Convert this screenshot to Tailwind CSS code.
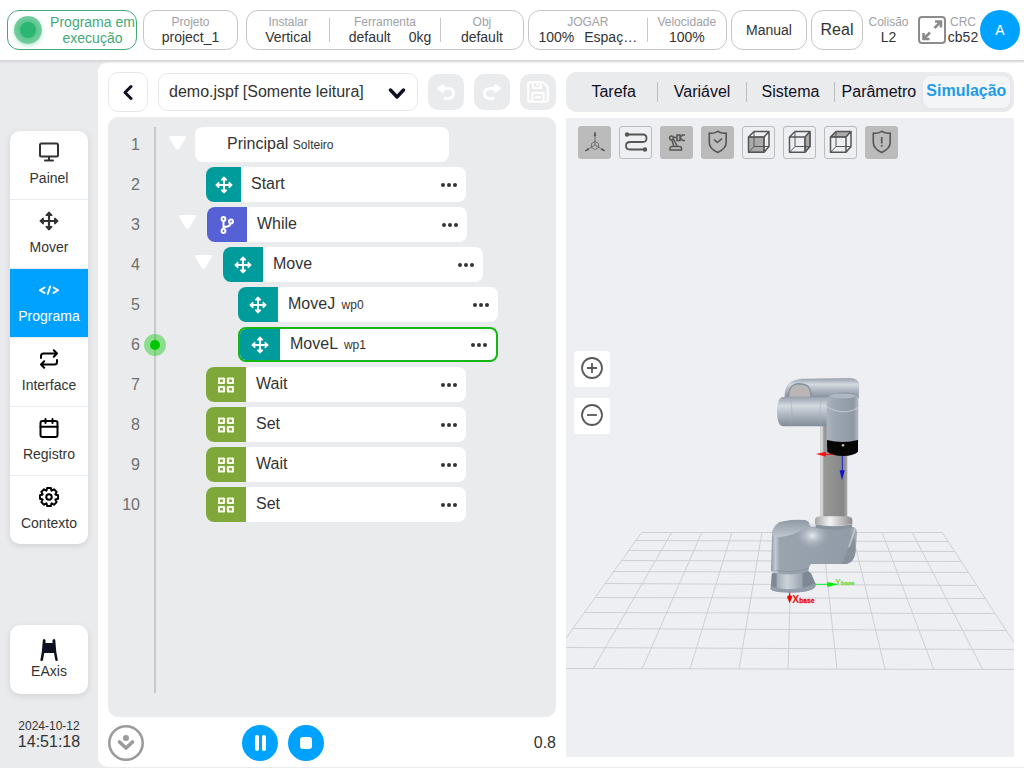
<!DOCTYPE html>
<html lang="pt">
<head>
    <meta charset="UTF-8">
    <meta name="viewport" content="width=device-width, initial-scale=1.0">
    <title>demo.jspf - Programa</title>
    <script src="https://cdn.jsdelivr.net/npm/@tailwindcss/browser@4"></script>
</head>
<body class="flex h-screen min-h-[700px] flex-col bg-[#eaebed] font-['Liberation_Sans',Arial,sans-serif] text-sm text-[#333]">

    <!-- Shared icons -->
    <svg class="hidden">
        <symbol id="move" viewBox="0 0 20 20">
            <path d="M10 3v14M3 10h14" fill="none" stroke="currentColor" stroke-width="2.200"/>
            <path d="M10 1.200 12.800 4.200H7.200zM10 18.800l2.800-3H7.200zM1.200 10l3-2.800v5.600zM18.800 10l-3-2.800v5.600z" fill="currentColor" stroke="currentColor" stroke-width="1.400" stroke-linejoin="round"/>
        </symbol>
        <symbol id="blocks" viewBox="0 0 16 16">
            <path d="M1 1.500h5v4.500H1zM10 1.500h5v4.500h-5zM1 10h5v4.500H1zM10 10h5v4.500h-5z" fill="none" stroke="currentColor" stroke-width="2.200" stroke-linejoin="round"/>
        </symbol>
        <symbol id="dots" viewBox="0 0 16 4">
            <circle cx="2" cy="2" r="2"/><circle cx="8" cy="2" r="2"/><circle cx="14" cy="2" r="2"/>
        </symbol>
        <symbol id="caret" viewBox="0 0 17 14">
            <path d="M2 0h13q3 0 1.500 2.500L10.500 12.500q-2 2.500-4 0L.5 2.500Q-1 0 2 0z" fill="#fff"/>
        </symbol>
    </svg>

    <!-- Status bar -->
    <header class="z-10 flex h-[60px] shrink-0 items-center gap-1 bg-white pr-1 pl-[7px] text-center shadow-[0_1px_2px_1px_#d5d6d8]">
        <div class="flex h-10 w-[130px] items-center rounded-xl border border-[#43a877] pl-1.5">
            <span class="flex size-7 shrink-0 items-center justify-center rounded-full bg-radial from-[#2bb673] to-[#8fd9b4] shadow-[0_2px_4px_#c5ecd8]"><span class="size-4 rounded-full bg-[#2bb673]"></span></span>
            <span class="ml-2 w-[85px] text-sm leading-4 whitespace-nowrap text-[#43a877]">Programa em<br>execução</span>
        </div>
        <div class="ml-0.5 flex h-10 w-[95px] flex-col justify-center rounded-xl border border-[#c5c6c8]">
            <span class="text-xs leading-[14px] text-[#a0a1a6]">Projeto</span>
            <span class="leading-4">project_1</span>
        </div>
        <div class="ml-1 flex h-10 flex-1 items-center rounded-xl border border-[#c5c6c8]">
            <div class="flex h-6 flex-3 flex-col justify-center border-r border-[#c5c6c8]">
                <span class="text-xs leading-[14px] text-[#a0a1a6]">Instalar</span>
                <span class="leading-4">Vertical</span>
            </div>
            <div class="flex h-6 flex-4 flex-col justify-center border-r border-[#c5c6c8]">
                <span class="text-xs leading-[14px] text-[#a0a1a6]">Ferramenta</span>
                <span class="flex justify-center gap-[18px] pl-2.5 leading-4"><span>default</span><span>0kg</span></span>
            </div>
            <div class="flex h-6 flex-3 flex-col justify-center">
                <span class="text-xs leading-[14px] text-[#a0a1a6]">Obj</span>
                <span class="leading-4">default</span>
            </div>
        </div>
        <div class="flex h-10 w-[199px] items-center rounded-xl border border-[#c5c6c8]">
            <div class="flex h-6 flex-3 flex-col justify-center border-r border-[#c5c6c8]">
                <span class="text-xs leading-[14px] text-[#a0a1a6]">JOGAR</span>
                <span class="flex justify-center gap-2.5 leading-4"><span>100%</span><span>Espaç…</span></span>
            </div>
            <div class="flex h-6 flex-2 flex-col justify-center">
                <span class="text-xs leading-[14px] text-[#a0a1a6]">Velocidade</span>
                <span class="leading-4">100%</span>
            </div>
        </div>
        <button class="h-10 w-[76px] rounded-xl border border-[#c5c6c8]">Manual</button>
        <button class="h-10 w-[52px] rounded-xl border border-[#c5c6c8] text-base">Real</button>
        <div class="flex w-[43px] flex-col">
            <span class="text-xs leading-[14px] text-[#a0a1a6]">Colisão</span>
            <span class="leading-4">L2</span>
        </div>
        <div class="ml-1 flex items-center">
            <button aria-label="Tela cheia" class="size-7">
                <svg viewBox="0 0 28 28" class="size-7" fill="none" stroke="#8c8c8c" stroke-width="2">
                    <rect x="1" y="1" width="26" height="26" rx="3"/>
                    <path d="M17 5.500h6v6M23 5.500l-6.500 6.500M5.500 17v6h6M5.500 23l6.500-6.500" stroke-width="2.600"/>
                </svg>
            </button>
            <div class="flex w-[34px] flex-col items-center">
                <span class="text-xs leading-[14px] text-[#a0a1a6]">CRC</span>
                <span class="leading-4">cb52</span>
            </div>
            <button class="size-10 rounded-full bg-[#00a2ff] text-white">A</button>
        </div>
    </header>

    <div class="flex min-h-0 flex-1 pt-0.5 pb-px">
        <!-- Side menu -->
        <aside class="flex w-[98px] shrink-0 flex-col items-center pt-[69px] pb-4">
            <nav class="w-[78px] overflow-hidden rounded-[10px] bg-white shadow-[0_2px_6px_#d0d1d3]">
                <a href="#" class="flex h-[69px] flex-col items-center justify-center gap-1.5 border-b border-[#eaebed] leading-5">
                    <svg viewBox="0 0 20 20" class="size-5" fill="none" stroke="currentColor" stroke-width="2" stroke-linecap="round"><rect x="1" y="1.500" width="18" height="13" rx="1.500"/><path d="M10 15v3M6 18.500h8"/></svg>
                    Painel
                </a>
                <a href="#" class="flex h-[69px] flex-col items-center justify-center gap-1.5 border-b border-[#eaebed] leading-5">
                    <svg class="size-5"><use href="#move"/></svg>
                    Mover
                </a>
                <a href="#" class="flex h-[69px] flex-col items-center justify-center gap-1.5 border-b border-[#eaebed] bg-[#00a2ff] leading-5 text-white">
                    <svg viewBox="0 0 20 20" class="size-5" fill="none" stroke="currentColor" stroke-width="1.900" stroke-linecap="round" stroke-linejoin="round"><path d="M5.500 7.500.9 10.200l4.600 2.700M14.500 7.500l4.600 2.700-4.600 2.700M11.200 6.500 8.800 13.800"/></svg>
                    Programa
                </a>
                <a href="#" class="flex h-[69px] flex-col items-center justify-center gap-1.5 border-b border-[#eaebed] leading-5">
                    <svg viewBox="0 0 20 20" class="size-5" fill="none" stroke="#000" stroke-width="2" stroke-linecap="round" stroke-linejoin="round"><path d="M2 9V7q0-2.500 2.500-2.500H18M14.800 1.200 18 4.500l-3.200 3.200M18 11v2q0 2.500-2.500 2.500H2M5.200 12.300 2 15.500l3.200 3.300"/></svg>
                    Interface
                </a>
                <a href="#" class="flex h-[69px] flex-col items-center justify-center gap-1.5 border-b border-[#eaebed] leading-5">
                    <svg viewBox="0 0 20 20" class="size-5" fill="none" stroke="#000" stroke-width="2" stroke-linecap="round" stroke-linejoin="round"><rect x="1.500" y="3" width="17" height="16" rx="2"/><path d="M1.500 8.700h17M6.500 1v4M13.500 1v4"/></svg>
                    Registro
                </a>
                <a href="#" class="flex h-[68px] flex-col items-center justify-center gap-1.5 leading-5">
                    <svg viewBox="1 1 22 22" class="size-5" fill="none" stroke="#000" stroke-width="2.200" stroke-linejoin="round"><circle cx="12" cy="12" r="3"/><path d="M10 2h4l.8 3 2.700-1.500 2.900 2.900L19 9.200l3 .8v4l-3 .8 1.400 2.800-2.900 2.900-2.700-1.500-.8 3h-4l-.8-3-2.700 1.500-2.900-2.900L5 14.800 2 14v-4l3-.8-1.400-2.800 2.900-2.900L9.200 5z"/></svg>
                    Contexto
                </a>
            </nav>

            <a href="#" class="mt-auto flex h-[69px] w-[78px] flex-col items-center justify-center rounded-[10px] bg-white leading-5 shadow-[0_2px_6px_#d0d1d3]">
                <svg viewBox="0 0 18 22" class="h-[22px] w-[18px]" fill="#0f0f23"><path d="M4 0q1.500 0 1.500 1.500V4h7V1.500Q12.500 0 14 0t1.300 1.500l1 11.500 1.500 8q0 1-1.200 1t-1.300-1L14 14H4.200L3 21q-.2 1-1.500 1T.4 21l1.400-8 1-11.500Q2.900 0 4 0z"/></svg>
                EAxis
            </a>
            <p class="mt-6 text-center text-xs leading-4">2024-10-12<br><span class="text-base leading-4">14:51:18</span></p>
        </aside>

        <main class="flex min-w-0 flex-1 gap-2.5 rounded-l-[10px] bg-white p-2.5 pb-1.5">
            <!-- Program -->
            <section class="flex min-w-0 flex-1 flex-col">
                <div class="flex items-center gap-2.5">
                    <button aria-label="Voltar" class="flex size-10 shrink-0 items-center justify-center rounded-[10px] border border-[#e6e7ea]">
                        <svg viewBox="0 0 10 16" class="h-4 w-2.5" fill="none" stroke="#0f0f23" stroke-width="3" stroke-linecap="round" stroke-linejoin="round"><path d="M8 2.500 2 8.500l6 6"/></svg>
                    </button>
                    <div class="relative flex-1">
                        <select aria-label="Arquivo" class="h-[38px] w-full appearance-none rounded-[10px] border border-[#e6e7ea] bg-white px-2.5 text-base">
                            <option>demo.jspf [Somente leitura]</option>
                        </select>
                        <svg viewBox="0 0 18 12" class="pointer-events-none absolute top-[15px] right-3 h-3 w-[18px]" fill="none" stroke="#0f0f23" stroke-width="3.400" stroke-linecap="round" stroke-linejoin="round"><path d="m2.500 2 6.500 7 6.500-7"/></svg>
                    </div>
                    <button aria-label="Desfazer" class="flex size-9 shrink-0 items-center justify-center rounded-[10px] bg-[#eaebed]">
                        <svg viewBox="0 0 20 20" class="size-5" fill="none" stroke="#fff" stroke-width="2.800" stroke-linecap="round" stroke-linejoin="round"><path d="M3 6.500h9q5.500 0 5.500 5T12 16.500H9"/><path d="M7 3.800 2.500 6.500 7 9.200z" fill="#fff"/></svg>
                    </button>
                    <button aria-label="Refazer" class="flex size-9 shrink-0 items-center justify-center rounded-[10px] bg-[#eaebed]">
                        <svg viewBox="0 0 20 20" class="size-5" fill="none" stroke="#fff" stroke-width="2.800" stroke-linecap="round" stroke-linejoin="round"><path d="M17 6.500H8q-5.500 0-5.500 5T8 16.500h3"/><path d="m13 3.800 4.500 2.700L13 9.200z" fill="#fff"/></svg>
                    </button>
                    <button aria-label="Salvar" class="flex size-9 shrink-0 items-center justify-center rounded-[10px] bg-[#eaebed]">
                        <svg viewBox="0 0 22 22" class="size-[22px]" fill="none" stroke="#fff" stroke-width="2" stroke-linejoin="round"><path d="M3 1.200h13l4.800 4.800v13q0 1.800-1.800 1.800H3q-1.800 0-1.800-1.800V3Q1.200 1.200 3 1.200z"/><path d="M6 1.500V7h8V1.500M5.500 20.500V12h11v8.500M8 16.200h6M10.500 2v3"/></svg>
                    </button>
                </div>

                <!-- Program tree -->
                <div class="mt-[5px] flex min-h-0 flex-1 rounded-[10px] bg-[#eaebed] pt-2.5 pb-6">
                    <div class="w-8 shrink-0 text-right text-base leading-[35px] text-[#707070]">
                        <p class="mb-[5px]">1</p>
                        <p class="mb-[5px]">2</p>
                        <p class="mb-[5px]">3</p>
                        <p class="mb-[5px]">4</p>
                        <p class="mb-[5px]">5</p>
                        <p class="mb-[5px]">6</p>
                        <p class="mb-[5px]">7</p>
                        <p class="mb-[5px]">8</p>
                        <p class="mb-[5px]">9</p>
                        <p>10</p>
                    </div>
                    <div class="relative ml-3.5 w-0.5 shrink-0 bg-[#c8c9cb]">
                        <!-- running line marker -->
                        <span class="absolute top-[207px] -left-2.5 flex size-[22px] items-center justify-center rounded-full bg-[#00c800]/40"><span class="size-2.5 rounded-full bg-[#00c800]"></span></span>
                    </div>
                    <ul class="flex flex-col gap-[5px] text-base leading-[33px]">
                        <li class="flex pl-[13px]">
                            <svg class="mt-[9px] mr-[9px] h-3.5 w-[17px]"><use href="#caret"/></svg>
                            <div class="h-[35px] w-[254px] rounded-lg bg-white pl-8">Principal <span class="text-xs">Solteiro</span></div>
                        </li>
                        <li class="flex pl-[50px]">
                            <div class="flex h-[35px] w-[260px] overflow-hidden rounded-lg bg-white pr-[9px]">
                                <span class="flex w-[35px] items-center justify-center bg-[#009b9b] text-white"><svg class="size-[18px]"><use href="#move"/></svg></span>
                                <span class="ml-2.5 flex-1">Start</span>
                                <button aria-label="Mais"><svg class="h-1 w-4" fill="#333"><use href="#dots"/></svg></button>
                            </div>
                        </li>
                        <li class="flex pl-[23px]">
                            <svg class="mt-2 mr-[11px] h-3.5 w-[17px]"><use href="#caret"/></svg>
                            <div class="flex h-[35px] w-[260px] overflow-hidden rounded-lg bg-white pr-[9px]">
                                <span class="flex w-10 items-center justify-center bg-[#5661d6] text-white">
                                    <svg viewBox="0 0 14 18" class="h-[18px] w-3.5" fill="none" stroke="currentColor" stroke-width="2"><circle cx="3.500" cy="3" r="1.900"/><circle cx="3.500" cy="15" r="1.900"/><circle cx="11" cy="5.500" r="1.900"/><path d="M3.500 5v8M10.500 7.500q-.5 3.500-7 3.500"/></svg>
                                </span>
                                <span class="ml-2.5 flex-1">While</span>
                                <button aria-label="Mais"><svg class="h-1 w-4" fill="#333"><use href="#dots"/></svg></button>
                            </div>
                        </li>
                        <li class="flex pl-[39px]">
                            <svg class="mt-2 mr-[11px] h-3.5 w-[17px]"><use href="#caret"/></svg>
                            <div class="flex h-[35px] w-[260px] overflow-hidden rounded-lg bg-white pr-[9px]">
                                <span class="flex w-10 items-center justify-center bg-[#009b9b] text-white"><svg class="size-[18px]"><use href="#move"/></svg></span>
                                <span class="ml-2.5 flex-1">Move</span>
                                <button aria-label="Mais"><svg class="h-1 w-4" fill="#333"><use href="#dots"/></svg></button>
                            </div>
                        </li>
                        <li class="flex pl-[82px]">
                            <div class="flex h-[35px] w-[260px] overflow-hidden rounded-lg bg-white pr-[9px]">
                                <span class="flex w-10 items-center justify-center bg-[#009b9b] text-white"><svg class="size-[18px]"><use href="#move"/></svg></span>
                                <span class="ml-2.5 flex-1">MoveJ <span class="ml-0.5 text-xs">wp0</span></span>
                                <button aria-label="Mais"><svg class="h-1 w-4" fill="#333"><use href="#dots"/></svg></button>
                            </div>
                        </li>
                        <li class="flex pl-[82px]">
                            <div class="flex h-[35px] w-[260px] overflow-hidden rounded-lg border-2 border-[#14b714] bg-white pr-[9px] leading-[29px]">
                                <span class="flex w-10 items-center justify-center bg-[#009b9b] text-white"><svg class="size-[18px]"><use href="#move"/></svg></span>
                                <span class="ml-2.5 flex-1">MoveL <span class="ml-0.5 text-xs">wp1</span></span>
                                <button aria-label="Mais"><svg class="h-1 w-4" fill="#333"><use href="#dots"/></svg></button>
                            </div>
                        </li>
                        <li class="flex pl-[50px]">
                            <div class="flex h-[35px] w-[260px] overflow-hidden rounded-lg bg-white pr-[9px]">
                                <span class="flex w-10 items-center justify-center bg-[#7ea93a] text-[#f8fce8]"><svg class="size-4"><use href="#blocks"/></svg></span>
                                <span class="ml-2.5 flex-1">Wait</span>
                                <button aria-label="Mais"><svg class="h-1 w-4" fill="#333"><use href="#dots"/></svg></button>
                            </div>
                        </li>
                        <li class="flex pl-[50px]">
                            <div class="flex h-[35px] w-[260px] overflow-hidden rounded-lg bg-white pr-[9px]">
                                <span class="flex w-10 items-center justify-center bg-[#7ea93a] text-[#f8fce8]"><svg class="size-4"><use href="#blocks"/></svg></span>
                                <span class="ml-2.5 flex-1">Set</span>
                                <button aria-label="Mais"><svg class="h-1 w-4" fill="#333"><use href="#dots"/></svg></button>
                            </div>
                        </li>
                        <li class="flex pl-[50px]">
                            <div class="flex h-[35px] w-[260px] overflow-hidden rounded-lg bg-white pr-[9px]">
                                <span class="flex w-10 items-center justify-center bg-[#7ea93a] text-[#f8fce8]"><svg class="size-4"><use href="#blocks"/></svg></span>
                                <span class="ml-2.5 flex-1">Wait</span>
                                <button aria-label="Mais"><svg class="h-1 w-4" fill="#333"><use href="#dots"/></svg></button>
                            </div>
                        </li>
                        <li class="flex pl-[50px]">
                            <div class="flex h-[35px] w-[260px] overflow-hidden rounded-lg bg-white pr-[9px]">
                                <span class="flex w-10 items-center justify-center bg-[#7ea93a] text-[#f8fce8]"><svg class="size-4"><use href="#blocks"/></svg></span>
                                <span class="ml-2.5 flex-1">Set</span>
                                <button aria-label="Mais"><svg class="h-1 w-4" fill="#333"><use href="#dots"/></svg></button>
                            </div>
                        </li>
                    </ul>
                </div>

                <!-- Run controls -->
                <div class="mt-2 flex items-center gap-2.5">
                    <button aria-label="Modo" class="mr-[88px]">
                        <svg viewBox="0 0 36 36" class="size-9" fill="none" stroke="#9b9b9b"><circle cx="18" cy="18" r="16.700" stroke-width="2.600"/><circle cx="18" cy="13" r="3" fill="#9b9b9b" stroke="none"/><path d="m11.500 17 6.500 6 6.500-6" stroke-width="3.600" stroke-linecap="round" stroke-linejoin="round"/></svg>
                    </button>
                    <button aria-label="Pausar" class="flex size-9 items-center justify-center gap-[3px] rounded-full bg-[#00a2ff]">
                        <span class="h-4 w-1 rounded-full bg-white"></span>
                        <span class="h-4 w-1 rounded-full bg-white"></span>
                    </button>
                    <button aria-label="Parar" class="flex size-9 items-center justify-center rounded-full bg-[#00a2ff]">
                        <span class="size-3 rounded-[3px] bg-white"></span>
                    </button>
                    <span class="ml-auto text-base">0.8</span>
                </div>
            </section>

            <!-- Simulation -->
            <section class="flex min-w-0 flex-1 flex-col pb-1">
                <div class="flex h-10 items-center rounded-[10px] bg-[#eaebed] px-1 text-base text-[#0f0f23]">
                    <button class="h-5 flex-1 basis-0 border-r border-[#b9bbbf] leading-[18px]">Tarefa</button>
                    <button class="h-5 flex-1 basis-0 border-r border-[#b9bbbf] leading-[18px]">Variável</button>
                    <button class="h-5 flex-1 basis-0 border-r border-[#b9bbbf] leading-[18px]">Sistema</button>
                    <button class="h-5 flex-1 basis-0 leading-[18px]">Parâmetro</button>
                    <button class="h-8 flex-1 basis-0 rounded-lg bg-[#f4f5f6] pb-0.5 font-bold text-[#1e9ce8] shadow-[0_1px_4px_#dfe5ea]">Simulação</button>
                </div>

                <div class="relative mt-1.5 min-h-0 flex-1 bg-[#eeeff3]">
                    <svg viewBox="566 118 448 639" preserveAspectRatio="xMidYMid slice" class="absolute inset-0 h-full w-full">
                        <defs>
                            <linearGradient id="tube" x2="0" y2="1"><stop offset="0" stop-color="#98a2ae"/><stop offset=".3" stop-color="#d3dae1"/><stop offset=".65" stop-color="#a8b1bc"/><stop offset="1" stop-color="#828c98"/></linearGradient>
                            <linearGradient id="wrist"><stop offset="0" stop-color="#acb5c0"/><stop offset=".25" stop-color="#9da7b3"/><stop offset=".85" stop-color="#8f99a5"/><stop offset="1" stop-color="#b4bcc6"/></linearGradient>
                            <linearGradient id="column"><stop offset="0" stop-color="#c9c9c9"/><stop offset=".08" stop-color="#dcdcdc"/><stop offset=".14" stop-color="#999"/><stop offset=".85" stop-color="#868686"/><stop offset="1" stop-color="#aaa"/></linearGradient>
                            <linearGradient id="body"><stop offset="0" stop-color="#8b95a1"/><stop offset=".05" stop-color="#c5ccd4"/><stop offset=".1" stop-color="#9aa4af"/><stop offset=".9" stop-color="#929ca8"/><stop offset="1" stop-color="#a2abb6"/></linearGradient>
                            <linearGradient id="collar"><stop offset="0" stop-color="#a5a5a5"/><stop offset=".4" stop-color="#f3f3f3"/><stop offset="1" stop-color="#8d8d8d"/></linearGradient>
                            <linearGradient id="foot"><stop offset="0" stop-color="#a3acb7"/><stop offset=".4" stop-color="#ccd3da"/><stop offset="1" stop-color="#99a3ae"/></linearGradient>
                            <linearGradient id="cap" x2="0" y2="1"><stop offset="0" stop-color="#8f99a5"/><stop offset="1" stop-color="#c0c8d0"/></linearGradient>
                            <radialGradient id="glow"><stop offset="0" stop-color="#e6ebf0"/><stop offset=".4" stop-color="#c5cdd5" stop-opacity=".7"/><stop offset="1" stop-color="#a5aeb9" stop-opacity="0"/></radialGradient>
                        </defs>

                        <!-- floor -->
                        <path fill="none" stroke="#cfd0d3" d="M642 532 544 669M672 532 593 669M702 532 642 669M732 532 690 669M762 532 739 669M792 532 788 669M822 532 837 669M852 532 885 669M882 532 934 670M912 532 983 670M942 532 1032 670M642 532.500H942M635 540.500 948 541.500M628 550.500 954 551.500M621 560.500 961 561.500M613 571.500 968 572.500M605 583.500 976 585.500M595 597.500 985 598.500M584 612.500 995 613.500M572 628.500 1006 630.500M559 647.500 1018 649.500M544 668.500 1032 669.500"/>

                        <!-- robot, drawn at three times its size -->
                        <g transform="translate(740 350) scale(.33333)">
                            <path d="M134 145Q134 112 150 99 160 90 185 87L330 85Q356 87 356 103V145z" fill="url(#tube)" stroke="#8f99a5"/>
                            <path d="M145 142Q146 112 160 105 178 97 200 106 212 113 214 142z" fill="#b9b6b5" stroke="#858f9b" stroke-width="4"/>
                            <path d="M240 220H322V505H240z" fill="url(#column)"/>
                            <path d="M126 141H265V229H130Q112 228 111 185 112 143 126 141z" fill="url(#tube)"/>
                            <path d="M150 142Q162 185 150 229M246 142Q234 185 244 229" fill="none" stroke="#a2abb5" stroke-width="1.500"/>
                            <path d="M260 152Q262 132 300 127 345 126 355 143V275H260z" fill="url(#wrist)"/>
                            <ellipse cx="309" cy="138" rx="36" ry="7" fill="#b0b9c3"/>
                            <path d="M260 170Q290 188 318 185 350 182 358 166" fill="none" stroke="#ccd3da" stroke-width="2.500"/>
                            <path d="M261 270Q308 282 354 270V305Q344 317 308 318 280 318 262 305z" fill="#050505"/>
                            <circle cx="309" cy="286" r="4" fill="#bbb"/>
                            <path d="M258 313h22" stroke="#e00" stroke-width="3"/>
                            <path d="m228 312 30-7v15z" fill="#f11"/>
                            <path d="M307 318v45" stroke="#22d" stroke-width="3"/>
                            <path d="M299 361h15l-8 30z" fill="#11c"/>

                            <path d="M92 717 95 672 110 662H203L213 670 227 702Q227 726 160 727 96 727 92 717z" fill="#7f8995"/>
                            <path d="M92 707Q155 733 227 700V708Q222 725 160 728 96 728 92 717z" fill="#949eaa"/>
                            <path d="M110 670H188V714Q150 722 110 714z" fill="url(#foot)"/>
                            <path d="M96 560Q94 530 118 516L190 509Q208 512 208 525L213 530H334Q352 530 351 550L347 600Q344 640 315 642H213Q205 650 205 664 160 680 106 670L93 662z" fill="url(#body)"/>
                            <ellipse cx="217" cy="557" rx="50" ry="40" fill="url(#glow)"/>
                            <path d="M343 560Q325 585 306 642H315Q344 640 347 600z" fill="#87919d"/>
                            <path d="M345 535Q336 570 326 592" stroke="#d7dde3" stroke-width="5" fill="none" opacity=".6"/>
                            <path d="M99 553Q100 521 130 514 170 507 195 511 209 514 208 524 175 554 115 562 99 562 99 553z" fill="url(#cap)"/>
                            <path d="M106 661Q160 672 205 655" fill="none" stroke="#7d8793" stroke-width="1.500"/>
                            <path d="M225 509Q225 499 245 499H322Q337 502 337 509V522Q280 534 225 522z" fill="url(#collar)"/>
                            <path d="M227 523Q280 535 336 523V533Q280 546 227 533z" fill="#89929d"/>

                            <path d="M227 703h40" stroke="#1e2" stroke-width="3"/>
                            <path d="m262 696 33 7-33 8z" fill="#0e0"/>
                            <path d="M149 728v14" stroke="#e00" stroke-width="3"/>
                            <path d="M141 740q8-8 16 0l-8 20z" fill="#e00"/>
                            <text x="285" y="705" font-size="26" font-weight="bold" fill="#7fdc3e">Y<tspan font-size="18" stroke="#7fdc3e">base</tspan></text>
                            <text x="157" y="759" font-size="31" font-weight="bold" fill="#ee1111">X<tspan font-size="20" stroke="#ee1111">base</tspan></text>
                        </g>
                    </svg>

                    <!-- view tools -->
                    <div class="absolute top-2 left-3 flex gap-2 text-[#555]">
                        <button aria-label="Eixos" class="size-[33px] rounded-[3px] bg-[#bbb]">
                            <svg viewBox="0 0 33 33" fill="none" stroke="currentColor" stroke-width=".7"><path d="M17 7v12L8 24.500M17 19l9 5.500M17 15.500l3.500 2v4L17 23.500l-3.500-2v-4z"/><path d="m17 6 .8 4h-1.600zM7 25l3-2.500.8 1.300zM27 25l-3-2.500-.8 1.300z" fill="currentColor"/></svg>
                        </button>
                        <button aria-label="Trajetória" class="size-[33px] rounded-[3px] border border-[#bbb]">
                            <svg viewBox="1 1 31 31" fill="none" stroke="currentColor" stroke-width="1.800"><path d="M8 8.500h16q3.500 0 3.500 3.700T24 16H11q-4 0-4 3.700t4 3.800h15"/><circle cx="8" cy="8.500" r="1.300" fill="currentColor"/><circle cx="26" cy="23.500" r="1.300" fill="currentColor"/></svg>
                        </button>
                        <button aria-label="Robô" class="size-[33px] rounded-[3px] bg-[#bbb]">
                            <svg viewBox="0 0 33 33" fill="none" stroke="currentColor" stroke-width="1.500"><circle cx="11.500" cy="12" r="1.900"/><path d="M13.400 11.500h3.600M11.800 14l2.200 6.500M13.500 13.300l4 7.200M17 9v5.500h3V9zM25 9h-2.500L20 11.500l2.500 3H25M10 24v-1.500q0-2 2-2h7.500q2 0 2 2V24z"/></svg>
                        </button>
                        <button aria-label="Segurança" class="size-[33px] rounded-[3px] bg-[#bbb]">
                            <svg viewBox="0 0 33 33" fill="none" stroke="currentColor" stroke-width="1.600" stroke-linejoin="round"><path d="M16.700 5.300Q12.500 8 8.300 7v9.500q0 6 8.400 10 8.500-4 8.500-10V7Q21 8 16.700 5.300z"/><path d="m13 13.500 3.300 3 4.700-3.800"/></svg>
                        </button>
                        <button aria-label="Vista frontal" class="size-[33px] rounded-[3px] border border-[#bbb]">
                            <svg viewBox="1 1 31 31" fill="none" stroke="currentColor" stroke-linejoin="round"><path d="M6.500 11h15.500v15.300H6.500z" fill="#aaa"/><path d="M12 5.500v15h15M12 20.500l-5.500 5.800"/><path d="M6.500 11 12 5.500h15v15l-5 5.800H6.500zM6.500 11H22v15.300M22 11l5-5.500" stroke-width="1.500"/></svg>
                        </button>
                        <button aria-label="Vista lateral" class="size-[33px] rounded-[3px] border border-[#bbb]">
                            <svg viewBox="1 1 31 31" fill="none" stroke="currentColor" stroke-linejoin="round"><path d="m22 11 5-5.500v15l-5 5.800z" fill="#aaa"/><path d="M12 5.500v15h15M12 20.500l-5.500 5.800"/><path d="M6.500 11 12 5.500h15v15l-5 5.800H6.500zM6.500 11H22v15.300M22 11l5-5.500" stroke-width="1.500"/></svg>
                        </button>
                        <button aria-label="Vista superior" class="size-[33px] rounded-[3px] border border-[#bbb]">
                            <svg viewBox="1 1 31 31" fill="none" stroke="currentColor" stroke-linejoin="round"><path d="M6.500 11 12 5.500h15L22 11z" fill="#aaa"/><path d="M12 5.500v15h15M12 20.500l-5.500 5.800"/><path d="M6.500 11 12 5.500h15v15l-5 5.800H6.500zM6.500 11H22v15.300M22 11l5-5.500" stroke-width="1.500"/></svg>
                        </button>
                        <button aria-label="Alerta" class="size-[33px] rounded-[3px] bg-[#bbb]">
                            <svg viewBox="0 0 33 33" fill="none" stroke="currentColor" stroke-width="1.600" stroke-linejoin="round"><path d="M16.700 5.300Q12.500 8 8.300 7v9.500q0 6 8.400 10 8.500-4 8.500-10V7Q21 8 16.700 5.300z"/><path d="M16.700 11v6.500M16.700 19v1.800"/></svg>
                        </button>
                    </div>

                    <div class="absolute top-[233px] left-2 flex flex-col gap-[11px]">
                        <button aria-label="Ampliar" class="flex size-9 items-center justify-center rounded bg-white pb-0.5">
                            <svg viewBox="0 0 22 22" class="size-[22px]" fill="none" stroke="#595959" stroke-width="1.800"><circle cx="11" cy="11" r="10"/><path d="M11 6v10M6 11h10"/></svg>
                        </button>
                        <button aria-label="Reduzir" class="flex size-9 items-center justify-center rounded bg-white pb-0.5">
                            <svg viewBox="0 0 22 22" class="size-[22px]" fill="none" stroke="#595959" stroke-width="1.800"><circle cx="11" cy="11" r="10"/><path d="M6 11h10"/></svg>
                        </button>
                    </div>
                </div>
            </section>
        </main>
    </div>
</body>
</html>
